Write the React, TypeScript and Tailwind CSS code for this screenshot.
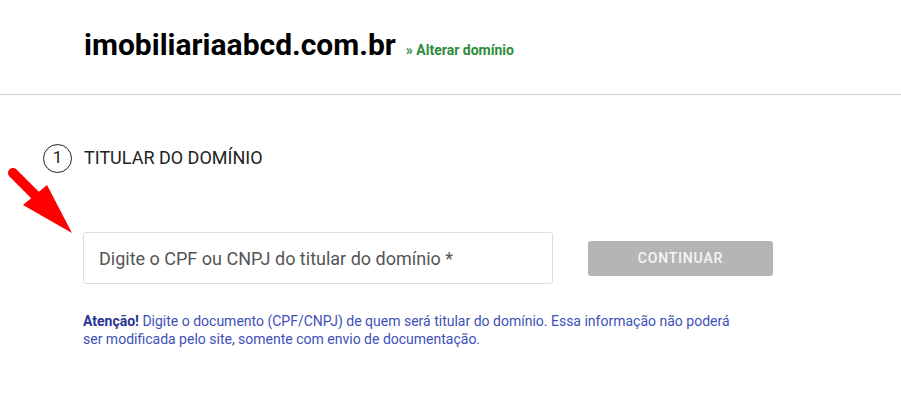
import React from "react";

const roboto = { fontFamily: "Roboto, 'Liberation Sans', sans-serif" };

function RedArrow() {
  return (
    <svg
      className="absolute left-0 top-[160px]"
      width="80"
      height="80"
      viewBox="0 0 80 80"
    >
      <line x1="13" y1="13" x2="38" y2="38" stroke="#ff0000" strokeWidth="10" strokeLinecap="round" />
      <polygon points="72,73 23,45 47,25" fill="#ff0000" />
    </svg>
  );
}

export default function App() {
  return (
    <div className="relative w-[901px] h-[402px] bg-white overflow-hidden" style={roboto}>
      {/* cabeçalho */}
      <header className="h-[95px] border-b border-[#cccccc] pl-[84px] pt-[25px]">
        <div className="flex items-baseline gap-[10px]">
          <h1 className="text-[30px] leading-[40px] font-bold text-black">imobiliariaabcd.com.br</h1>
          <a href="#" className="text-[14px] font-bold text-[#2f8a3b]">
            » Alterar domínio
          </a>
        </div>
      </header>

      <RedArrow />

      <main className="pl-[43px] pt-[48px]">
        <div className="flex items-center gap-[12px]">
          <span className="w-[29px] h-[29px] rounded-full border border-[#222] flex items-center justify-center text-[17px] text-[#222]">
            1
          </span>
          <h2 className="text-[18px] leading-[30px] text-[#222]">TITULAR DO DOMÍNIO</h2>
        </div>

        <div className="pl-[40px] mt-[59px]">
          <div className="flex items-center gap-[35px]">
            <input
              type="text"
              placeholder="Digite o CPF ou CNPJ do titular do domínio *"
              className="w-[470px] h-[52px] border border-[#dddddd] rounded-[3px] px-[15px] text-[18px] text-[#555] placeholder:text-[#555] outline-none"
              style={roboto}
            />
            <button
              type="button"
              className="w-[185px] h-[35px] rounded-[3px] bg-[#b5b5b5] text-[#f5f5f5] text-[14px] font-medium tracking-[0.8px]"
              style={roboto}
            >
              CONTINUAR
            </button>
          </div>

          <p className="mt-[28px] max-w-[660px] text-[14px] leading-[18px] text-[#4050b8]">
            <strong className="font-bold text-[#283593]">Atenção!</strong> Digite o documento (CPF/CNPJ) de quem será
            titular do domínio. Essa informação não poderá ser modificada pelo site, somente com envio de documentação.
          </p>
        </div>
      </main>
    </div>
  );
}
